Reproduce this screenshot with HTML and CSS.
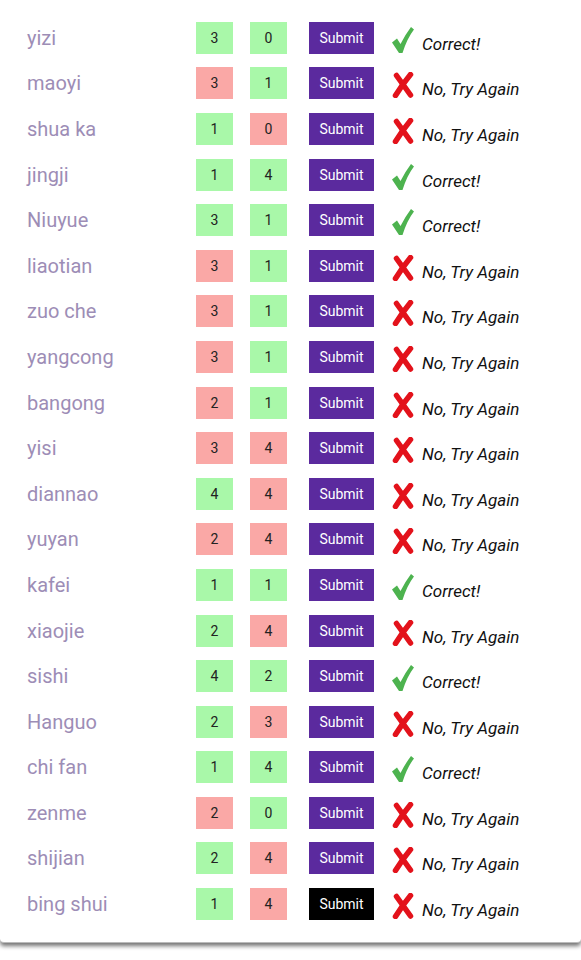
FILE: index.html
```html
<!DOCTYPE html>
<html lang="en">
<head>
    <meta charset="UTF-8">
    <meta name="viewport" content="width=device-width, initial-scale=1.0">
    <title>Tones Quiz</title>
    <link rel="stylesheet" href="styles.css">
</head>
<body>
    <svg width="0" height="0" class="defs">
        <symbol id="tick" viewBox="0 0 22 26">
            <path d="M0 15.5 L5 11.5 L8.5 17 Q13 8 19 0 L22 2.5 Q15 11.5 10.5 26 L7 26 Z"/>
        </symbol>
        <symbol id="cross" viewBox="0 0 22 26">
            <path d="M4.5 3.5 Q11 12.5 18.5 23" fill="none" stroke-width="5.5" stroke-linecap="round"/>
            <path d="M18.5 2.5 Q11 11.5 3.5 23.5" fill="none" stroke-width="5.5" stroke-linecap="round"/>
        </symbol>
    </svg>
    <div class="card">
        <div class="row"><span class="word">yizi</span><span class="tone ok">3</span><span class="tone ok">0</span><button class="submit">Submit</button><span class="result"><svg class="mark yes"><use href="#tick"/></svg><span class="msg">Correct!</span></span></div>
        <div class="row"><span class="word">maoyi</span><span class="tone bad">3</span><span class="tone ok">1</span><button class="submit">Submit</button><span class="result"><svg class="mark no"><use href="#cross"/></svg><span class="msg">No, Try Again</span></span></div>
        <div class="row"><span class="word">shua ka</span><span class="tone ok">1</span><span class="tone bad">0</span><button class="submit">Submit</button><span class="result"><svg class="mark no"><use href="#cross"/></svg><span class="msg">No, Try Again</span></span></div>
        <div class="row"><span class="word">jingji</span><span class="tone ok">1</span><span class="tone ok">4</span><button class="submit">Submit</button><span class="result"><svg class="mark yes"><use href="#tick"/></svg><span class="msg">Correct!</span></span></div>
        <div class="row"><span class="word">Niuyue</span><span class="tone ok">3</span><span class="tone ok">1</span><button class="submit">Submit</button><span class="result"><svg class="mark yes"><use href="#tick"/></svg><span class="msg">Correct!</span></span></div>
        <div class="row"><span class="word">liaotian</span><span class="tone bad">3</span><span class="tone ok">1</span><button class="submit">Submit</button><span class="result"><svg class="mark no"><use href="#cross"/></svg><span class="msg">No, Try Again</span></span></div>
        <div class="row"><span class="word">zuo che</span><span class="tone bad">3</span><span class="tone ok">1</span><button class="submit">Submit</button><span class="result"><svg class="mark no"><use href="#cross"/></svg><span class="msg">No, Try Again</span></span></div>
        <div class="row"><span class="word">yangcong</span><span class="tone bad">3</span><span class="tone ok">1</span><button class="submit">Submit</button><span class="result"><svg class="mark no"><use href="#cross"/></svg><span class="msg">No, Try Again</span></span></div>
        <div class="row"><span class="word">bangong</span><span class="tone bad">2</span><span class="tone ok">1</span><button class="submit">Submit</button><span class="result"><svg class="mark no"><use href="#cross"/></svg><span class="msg">No, Try Again</span></span></div>
        <div class="row"><span class="word">yisi</span><span class="tone bad">3</span><span class="tone bad">4</span><button class="submit">Submit</button><span class="result"><svg class="mark no"><use href="#cross"/></svg><span class="msg">No, Try Again</span></span></div>
        <div class="row"><span class="word">diannao</span><span class="tone ok">4</span><span class="tone bad">4</span><button class="submit">Submit</button><span class="result"><svg class="mark no"><use href="#cross"/></svg><span class="msg">No, Try Again</span></span></div>
        <div class="row"><span class="word">yuyan</span><span class="tone bad">2</span><span class="tone bad">4</span><button class="submit">Submit</button><span class="result"><svg class="mark no"><use href="#cross"/></svg><span class="msg">No, Try Again</span></span></div>
        <div class="row"><span class="word">kafei</span><span class="tone ok">1</span><span class="tone ok">1</span><button class="submit">Submit</button><span class="result"><svg class="mark yes"><use href="#tick"/></svg><span class="msg">Correct!</span></span></div>
        <div class="row"><span class="word">xiaojie</span><span class="tone ok">2</span><span class="tone bad">4</span><button class="submit">Submit</button><span class="result"><svg class="mark no"><use href="#cross"/></svg><span class="msg">No, Try Again</span></span></div>
        <div class="row"><span class="word">sishi</span><span class="tone ok">4</span><span class="tone ok">2</span><button class="submit">Submit</button><span class="result"><svg class="mark yes"><use href="#tick"/></svg><span class="msg">Correct!</span></span></div>
        <div class="row"><span class="word">Hanguo</span><span class="tone ok">2</span><span class="tone bad">3</span><button class="submit">Submit</button><span class="result"><svg class="mark no"><use href="#cross"/></svg><span class="msg">No, Try Again</span></span></div>
        <div class="row"><span class="word">chi fan</span><span class="tone ok">1</span><span class="tone ok">4</span><button class="submit">Submit</button><span class="result"><svg class="mark yes"><use href="#tick"/></svg><span class="msg">Correct!</span></span></div>
        <div class="row"><span class="word">zenme</span><span class="tone bad">2</span><span class="tone ok">0</span><button class="submit">Submit</button><span class="result"><svg class="mark no"><use href="#cross"/></svg><span class="msg">No, Try Again</span></span></div>
        <div class="row"><span class="word">shijian</span><span class="tone ok">2</span><span class="tone bad">4</span><button class="submit">Submit</button><span class="result"><svg class="mark no"><use href="#cross"/></svg><span class="msg">No, Try Again</span></span></div>
        <div class="row"><span class="word">bing shui</span><span class="tone ok">1</span><span class="tone bad">4</span><button class="submit active">Submit</button><span class="result"><svg class="mark no"><use href="#cross"/></svg><span class="msg">No, Try Again</span></span></div>
    </div>
</body>
</html>
```

FILE: styles.css
```css
body {
    margin: 0;
    background: #fff;
    font-family: Roboto, "Noto Sans", Arial, sans-serif;
}
.defs {
    position: absolute;
}
.card {
    background: #fff;
    padding: 15px 0 15px 0;
    margin-bottom: 20px;
    border-radius: 0 0 4px 4px;
    border-bottom: 1px solid #bbb;
    box-shadow: 0 3px 4px rgba(0, 0, 0, 0.55);
}
.row {
    display: flex;
    align-items: center;
    height: 45.6px;
    padding-left: 27px;
}
.word {
    width: 169px;
    font-size: 20px;
    color: #9d8db6;
}
.tone {
    width: 37px;
    height: 32px;
    margin-right: 17px;
    display: flex;
    align-items: center;
    justify-content: center;
    font-size: 14px;
    color: #222;
}
.tone + .tone {
    margin-right: 22px;
}
.ok {
    background: #a9f8a9;
}
.bad {
    background: #faa8a6;
}
.submit {
    width: 65px;
    height: 32px;
    border: none;
    padding: 0;
    background: #5b2a9e;
    color: #fff;
    font-family: Roboto, Arial, sans-serif;
    font-size: 14px;
}
.submit.active {
    background: #000;
}
.result {
    display: flex;
    align-items: center;
    margin-left: 18px;
}
.mark {
    width: 22px;
    height: 26px;
    margin-right: 8px;
    position: relative;
    top: 2px;
}
.yes {
    fill: #4db34f;
}
.no {
    stroke: #e3121b;
}
.msg {
    font-size: 17px;
    font-style: italic;
    color: #111;
    position: relative;
    top: 6px;
}
```
